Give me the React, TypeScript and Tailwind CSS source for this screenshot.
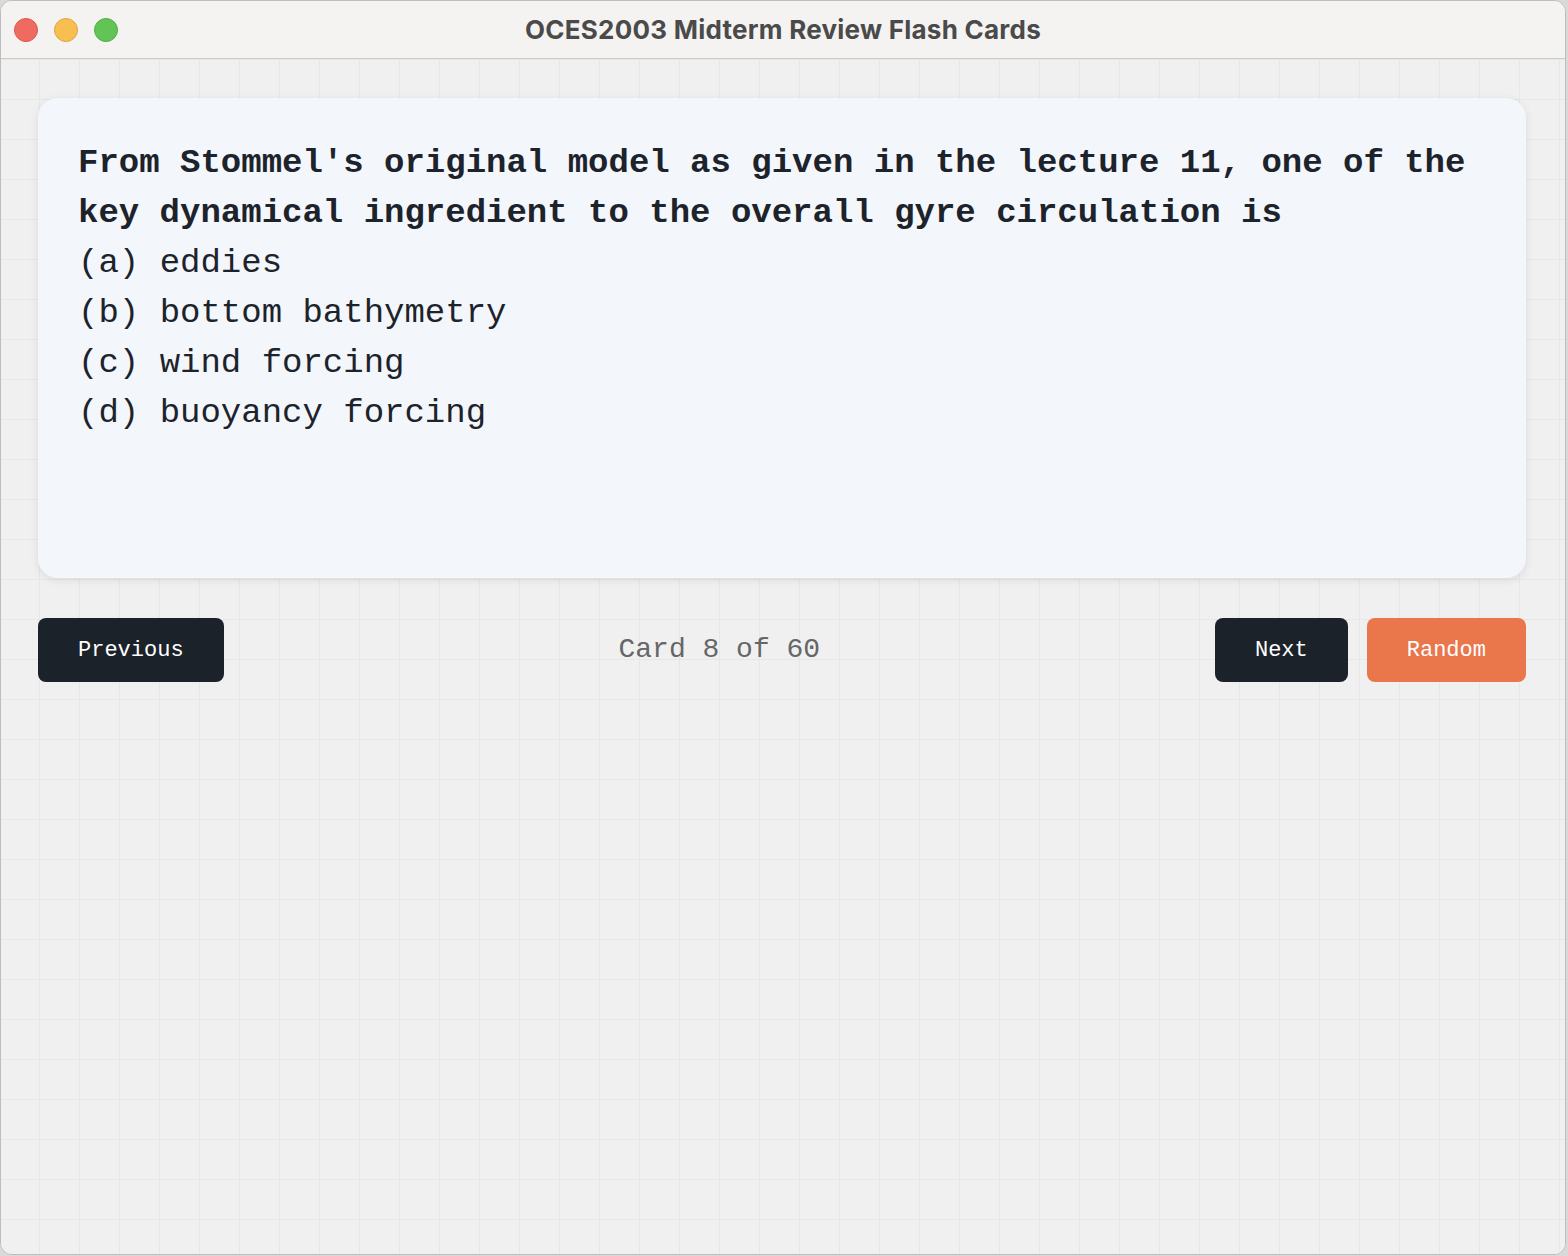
const mono = "font-['Liberation_Mono','Courier_New',monospace]";

const options = [
  { key: "a", text: "eddies" },
  { key: "b", text: "bottom bathymetry" },
  { key: "c", text: "wind forcing" },
  { key: "d", text: "buoyancy forcing" },
];

function TitleBar() {
  return (
    <div className="relative flex h-[58px] items-center justify-center border-b border-[#cbcbcb] bg-[#f4f3f1]">
      <div className="absolute left-[13px] top-[17px] flex gap-4">
        <span className="h-6 w-6 rounded-full border border-[#d9584e] bg-[#ef6b60]" />
        <span className="h-6 w-6 rounded-full border border-[#dea73e] bg-[#f6bf4f]" />
        <span className="h-6 w-6 rounded-full border border-[#53ad46] bg-[#61c455]" />
      </div>
      <h1 className="font-['Inter',sans-serif] text-[26px] font-bold tracking-[0.25px] text-[#4a4a4a]">
        OCES2003 Midterm Review Flash Cards
      </h1>
    </div>
  );
}

export default function App() {
  return (
    <div className="h-[1256px] w-[1568px] overflow-hidden bg-[#d9d9d9]">
      <div className="flex h-[1255px] w-[1566px] flex-col overflow-hidden rounded-[12px] border border-[#bdbdbd] bg-[#f0f0f0]">
        <TitleBar />
        <main className="flex-1 bg-[#f0f0f0] bg-[linear-gradient(to_right,#e7e7e7_1px,transparent_1px),linear-gradient(to_bottom,#e7e7e7_1px,transparent_1px)] bg-[size:40px_40px] bg-[position:-2px_0] pl-[37px] pr-[39px] pt-[39px]">
          <div className={`h-[480px] rounded-[20px] bg-[#f3f6fb] px-10 pt-[40px] shadow-[0_2px_10px_rgba(0,0,0,0.09)] ${mono} text-[34px] leading-[50px] text-[#1d232b]`}>
            <p className="font-bold">
              From Stommel's original model as given in the lecture 11, one of the key dynamical ingredient to the overall gyre circulation is
            </p>
            {options.map((o) => (
              <p key={o.key} className="whitespace-pre">
                ({o.key}) {o.text}
              </p>
            ))}
          </div>

          <div className={`mt-10 flex items-center justify-between ${mono}`}>
            <button className="h-16 rounded-[8px] bg-[#1b222a] px-10 text-[22px] text-white">Previous</button>
            <span className="text-[28px] text-[#666666]">Card 8 of 60</span>
            <div className="flex gap-[19px]">
              <button className="h-16 rounded-[8px] bg-[#1b222a] px-10 text-[22px] text-white">Next</button>
              <button className="h-16 rounded-[8px] bg-[#ea764c] px-10 text-[22px] text-white">Random</button>
            </div>
          </div>
        </main>
      </div>
    </div>
  );
}
